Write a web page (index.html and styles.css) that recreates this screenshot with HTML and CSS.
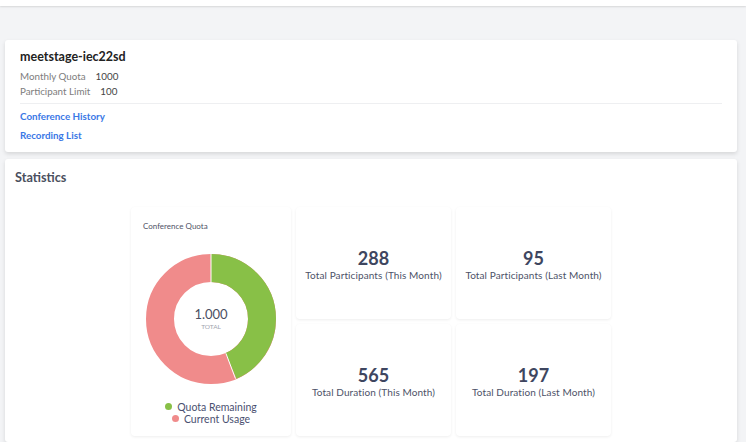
FILE: index.html
```html
<!DOCTYPE html>
<html>
<head>
<meta charset="utf-8">
<link rel="stylesheet" href="styles.css">
</head>
<body>
<div class="topbar"></div>
<main class="page">
  <section class="card info">
    <h1 class="title">meetstage-iec22sd</h1>
    <div class="meta"><span class="k">Monthly Quota</span><span class="v">1000</span></div>
    <div class="meta"><span class="k">Participant Limit</span><span class="v">100</span></div>
    <hr class="divider">
    <a class="link">Conference History</a>
    <a class="link">Recording List</a>
  </section>
  <section class="card stats">
    <h2 class="stats-title">Statistics</h2>
    <div class="grid">
      <div class="tile chart">
        <div class="chart-title">Conference Quota</div>
        <div class="donut">
          <svg width="130" height="130" viewBox="0 0 130 130">
            <circle cx="65" cy="65" r="51" fill="none" stroke="#f08b8b" stroke-width="28"/>
            <circle cx="65" cy="65" r="51" fill="none" stroke="#88c047" stroke-width="28" stroke-dasharray="139.4 400" transform="rotate(-90 65 65)"/>
            <line x1="65" y1="0" x2="65" y2="28" stroke="#fff" stroke-width="1"/>
            <line x1="89.5" y1="124.7" x2="79.9" y2="99.3" stroke="#fff" stroke-width="1"/>
          </svg>
          <div class="donut-center">
            <div class="donut-num">1.000</div>
            <div class="donut-lbl">TOTAL</div>
          </div>
        </div>
        <div class="legend">
          <div class="lg"><span class="dot green"></span>Quota Remaining</div>
          <div class="lg"><span class="dot red"></span>Current Usage</div>
        </div>
      </div>
      <div class="tile stat"><div class="num">288</div><div class="lbl">Total Participants (This Month)</div></div>
      <div class="tile stat"><div class="num">95</div><div class="lbl">Total Participants (Last Month)</div></div>
      <div class="tile stat"><div class="num">565</div><div class="lbl">Total Duration (This Month)</div></div>
      <div class="tile stat"><div class="num">197</div><div class="lbl">Total Duration (Last Month)</div></div>
    </div>
  </section>
</main>
</body>
</html>
```
FILE: styles.css
```css
html, body {
  margin: 0;
  padding: 0;
  background: #f3f4f6;
  font-family: Lato, "Open Sans", sans-serif;
  overflow: hidden;
}
.topbar {
  height: 6px;
  background: #fff;
  box-shadow: 0 1px 2px rgba(0,0,0,0.12);
}
.page {
  padding: 34px 9px 0 5px;
  display: flex;
  flex-direction: column;
  gap: 7px;
}
.card {
  background: #fff;
  border-radius: 3px;
  box-shadow: 0 2px 4px rgba(0,0,0,0.12);
}
.info {
  padding: 9px 15px 7px 15px;
  display: flex;
  flex-direction: column;
  align-items: flex-start;
}
.title {
  margin: 0 0 3.5px 0;
  font-size: 12.5px;
  line-height: 16px;
  font-weight: 700;
  color: #222;
}
.meta {
  font-size: 9.8px;
  line-height: 15px;
  color: #7d7d7d;
  display: flex;
  gap: 10px;
}
.meta .v { color: #444; }
.divider {
  align-self: stretch;
  margin: 4px 0 3px 0;
  border: 0;
  border-top: 1px solid #eeeff1;
  height: 0;
}
.link {
  font-size: 9.8px;
  line-height: 19px;
  font-weight: 700;
  color: #3a78e6;
}
.stats {
  padding: 10px 10px 6px 10px;
}
.stats-title {
  margin: 0 0 22px 0;
  font-size: 12.7px;
  line-height: 16px;
  font-weight: 700;
  color: #4a4f5e;
}
.grid {
  display: grid;
  grid-template-columns: 160px 155px 155px;
  grid-template-rows: 112px 112px;
  gap: 5px;
  justify-content: center;
}
.tile {
  background: #fff;
  border-radius: 4px;
  box-shadow: 0 1px 3px rgba(0,0,0,0.07);
}
.chart {
  grid-row: 1 / span 2;
  display: flex;
  flex-direction: column;
  align-items: center;
  padding: 14px 0 0 0;
}
.chart-title {
  align-self: flex-start;
  margin-left: 12px;
  font-size: 8px;
  line-height: 10px;
  color: #4f5366;
}
.donut {
  margin-top: 23px;
  position: relative;
  width: 130px;
  height: 130px;
}
.donut svg { display: block; }
.donut-center {
  position: absolute;
  inset: 0;
  display: flex;
  flex-direction: column;
  align-items: center;
  justify-content: center;
}
.donut-num {
  font-size: 13px;
  line-height: 15px;
  color: #4a4f62;
  margin-top: 2px;
}
.donut-lbl {
  font-size: 6.5px;
  line-height: 10px;
  color: #a0a4ad;
}
.legend {
  margin-top: 17px;
  display: flex;
  flex-direction: column;
  align-items: center;
}
.lg {
  font-size: 10.5px;
  line-height: 12px;
  color: #4a5070;
  display: flex;
  align-items: center;
  gap: 5px;
}
.dot {
  width: 7px;
  height: 7px;
  border-radius: 50%;
}
.green { background: #88c047; }
.red { background: #f08b8b; }
.stat {
  display: flex;
  flex-direction: column;
  align-items: center;
  justify-content: center;
  padding-top: 4px;
}
.num {
  font-size: 18px;
  line-height: 21px;
  font-weight: 700;
  color: #3e4660;
}
.lbl {
  font-size: 10px;
  line-height: 13px;
  color: #4d5268;
  letter-spacing: 0.1px;
}
```
